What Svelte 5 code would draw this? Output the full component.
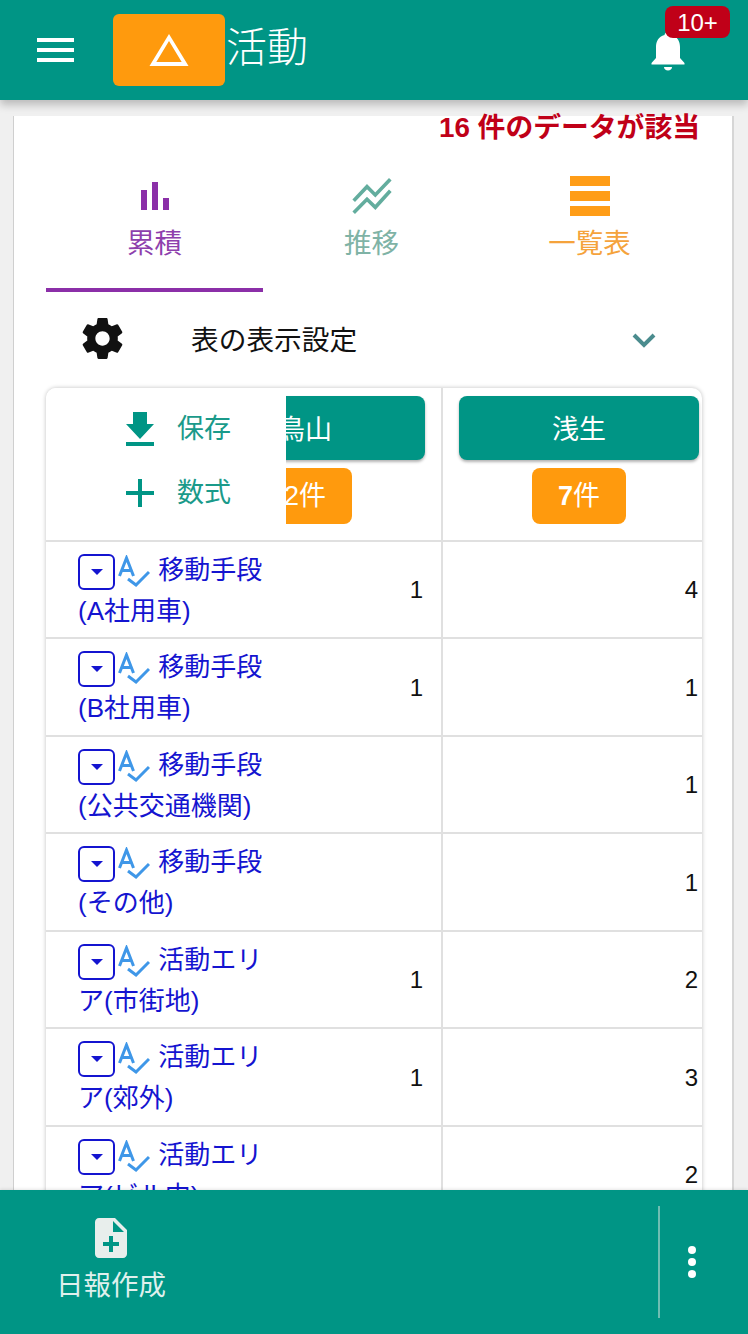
<script>
  const rows = [
    { label: '移動手段(A社用車)', a: '1', b: '4' },
    { label: '移動手段(B社用車)', a: '1', b: '1' },
    { label: '移動手段(公共交通機関)', a: '', b: '1' },
    { label: '移動手段(その他)', a: '', b: '1' },
    { label: '活動エリア(市街地)', a: '1', b: '2' },
    { label: '活動エリア(郊外)', a: '1', b: '3' },
    { label: '活動エリア(ビル内)', a: '', b: '2' }
  ];
</script>

<div class="page">
  <header class="top">
    <button class="menu" aria-label="メニュー"><span></span><span></span><span></span></button>
    <div class="logo">
      <svg width="40" height="34" viewBox="0 0 40 34"><path fill-rule="evenodd" d="M20 1 L39.500 33 H.5 Z M20 8 L7.300 29 H32.700 Z" fill="#fff"/></svg>
    </div>
    <h1>活動</h1>
    <div class="bell">
      <svg width="34" height="40" viewBox="0 0 34 40"><path d="M17 0c2 0 3.200 1.200 3.500 3 6 1.500 8.500 6.500 8.500 12v11l4.500 5v1.500H.5V31L5 26V15C5 9.500 7.500 4.500 13.500 3c.3-1.800 1.500-3 3.500-3z" fill="#fff"/><path d="M13 35h8c0 2-1.800 3.500-4 3.500S13 37 13 35z" fill="#fff"/></svg>
      <span class="badge">10+</span>
    </div>
  </header>

  <main class="main">
    <section class="card">
      <p class="hits">16 件のデータが該当</p>
      <nav class="tabs">
        <div class="tab active">
          <svg width="28" height="40" viewBox="0 0 28 40"><path d="M0 14h6v20H0zM11 6h6v28h-6zM22 22h6v12h-6z" fill="#8b2fa8"/></svg>
          <span>累積</span>
        </div>
        <div class="tab trend">
          <svg width="40" height="40" viewBox="0 0 40 40"><path d="M1.700 24.700 L15 10.700 L23.300 19 L38.300 3.300 M1.700 36.700 L15 23.300 L23.300 31.300 L38.300 14.700" fill="none" stroke="#63ad9e" stroke-width="3.600"/></svg>
          <span>推移</span>
        </div>
        <div class="tab list">
          <svg width="40" height="40" viewBox="0 0 40 40"><path d="M0 0h40v10H0zM0 15h40v10H0zM0 30h40v10H0z" fill="#ff9d17"/></svg>
          <span>一覧表</span>
        </div>
      </nav>

      <div class="settings">
        <svg class="gear" width="49" height="49" viewBox="0 0 24 24"><path fill="#111" d="M19.430 12.980c.04-.32.070-.64.070-.98s-.03-.66-.07-.98l2.110-1.650c.19-.15.240-.42.120-.64l-2-3.460c-.12-.22-.39-.3-.61-.22l-2.490 1c-.52-.4-1.080-.73-1.690-.98l-.38-2.650C14.460 2.180 14.250 2 14 2h-4c-.25 0-.46.18-.49.420l-.38 2.650c-.61.25-1.170.59-1.690.98l-2.490-1c-.23-.09-.49 0-.61.22l-2 3.460c-.13.22-.07.49.12.64l2.110 1.650c-.04.32-.07.65-.07.98s.03.66.07.98l-2.110 1.650c-.19.15-.24.42-.12.64l2 3.460c.12.22.39.3.61.22l2.490-1c.52.4 1.080.73 1.690.98l.38 2.650c.03.24.24.42.49.42h4c.25 0 .46-.18.49-.42l.38-2.650c.61-.25 1.170-.59 1.690-.98l2.490 1c.23.09.49 0 .61-.22l2-3.460c.12-.22.07-.49-.12-.64l-2.110-1.650zM12 15.500c-1.930 0-3.500-1.570-3.500-3.500s1.570-3.500 3.500-3.500 3.500 1.570 3.500 3.500-1.570 3.500-3.500 3.500z"/></svg>
        <span class="set-label">表の表示設定</span>
        <svg class="chev" width="24" height="16" viewBox="0 0 24 16"><path d="M2 3l10 10L22 3" fill="none" stroke="#4b8c8e" stroke-width="4"/></svg>
      </div>

      <div class="table">
        <div class="row head">
          <div class="fixed actions">
            <div class="action">
              <svg width="28" height="34" viewBox="0 0 28 34"><path d="M7 0h14v12h7L14 27 0 12h7zM0 30h28v4H0z" fill="#009585"/></svg>
              <span>保存</span>
            </div>
            <div class="action">
              <svg width="28" height="28" viewBox="0 0 28 28"><path d="M12 0h4v12h12v4H16v12h-4V16H0v-4h12z" fill="#009585"/></svg>
              <span>数式</span>
            </div>
          </div>
          <div class="col first">
            <div class="inner">
              <div class="name">鳥山</div>
              <div class="count">2件</div>
            </div>
          </div>
          <div class="col second">
            <div class="inner">
              <div class="name">浅生</div>
              <div class="count"><b>7</b>件</div>
            </div>
          </div>
        </div>
        {#each rows as r}
          <div class="row">
            <div class="fixed label">
              <span class="drop"><i></i></span><svg class="spell" width="32" height="32" viewBox="0 0 32 32"><path d="M1.500 21 L8.500 3 L15.500 21 M4.500 15.500 H12.500" fill="none" stroke="#3f97e8" stroke-width="3"/><path d="M10 24 L18 30 L31 17" fill="none" stroke="#3f97e8" stroke-width="3"/></svg>
              {r.label}
            </div>
            <div class="col first val">{r.a}</div>
            <div class="col second val">{r.b}</div>
          </div>
        {/each}
      </div>
    </section>
  </main>

  <footer class="bottom">
    <div class="report">
      <svg width="32" height="40" viewBox="4 2 16 20"><path fill="#e8eeec" d="M14 2H6c-1.100 0-1.990.9-1.990 2L4 20c0 1.100.89 2 1.990 2H18c1.100 0 2-.9 2-2V8l-6-6zm2 14h-3v3h-2v-3H8v-2h3v-3h2v3h3v2zm-3-7V3.500L18.500 9H13z"/></svg>
      <span>日報作成</span>
    </div>
    <div class="more">
      <i></i><i></i><i></i>
    </div>
  </footer>
</div>

<style>
  :global(body) {
    margin: 0;
    background: #f0f0f0;
  }
  .page {
    width: 748px;
    height: 1334px;
    display: flex;
    flex-direction: column;
    overflow: hidden;
    font-family: "Liberation Sans", "Noto Sans CJK JP", sans-serif;
    background: #f0f0f0;
  }
  .top {
    flex: 0 0 100px;
    display: flex;
    align-items: flex-start;
    background: #009585;
    box-shadow: 0 5px 8px rgba(0, 0, 0, 0.22);
    position: relative;
    z-index: 2;
  }
  .menu {
    margin: 38px 0 0 37px;
    padding: 0;
    width: 37px;
    height: 24px;
    border: 0;
    background: none;
    display: flex;
    flex-direction: column;
    justify-content: space-between;
  }
  .menu span {
    display: block;
    height: 4px;
    background: #fff;
  }
  .logo {
    margin: 14px 0 0 39px;
    width: 112px;
    height: 72px;
    background: #ff9a0d;
    border-radius: 6px;
    display: flex;
    align-items: center;
    justify-content: center;
  }
  h1 {
    margin: 22px 0 0 1px;
    color: #fff;
    font-size: 41px;
    font-weight: 300;
    line-height: 52px;
  }
  .bell {
    margin: 32px 63px 0 auto;
    position: relative;
    width: 34px;
    height: 40px;
  }
  .badge {
    position: absolute;
    left: 14px;
    top: -26px;
    width: 65px;
    height: 32px;
    border-radius: 8px;
    background: #c00018;
    color: #fff;
    font-size: 24px;
    line-height: 33px;
    text-align: center;
  }
  .main {
    flex: 1;
    min-height: 0;
    overflow: hidden;
    padding: 16px 14px 0 13px;
  }
  .card {
    background: #fff;
    height: 100%;
    border-left: 1px solid #cfcfcf;
    border-right: 2px solid #d6d6d6;
    box-sizing: border-box;
    padding: 0 30px 0 32px;
  }
  .hits {
    margin: 0 2px 0 0;
    height: 24px;
    text-align: right;
    color: #c00018;
    font-size: 27.800px;
    font-weight: 700;
    line-height: 24px;
    white-space: nowrap;
  }
  .tabs {
    display: grid;
    grid-template-columns: 217px 217px 219px;
    height: 152px;
  }
  .tab {
    display: flex;
    flex-direction: column;
    align-items: center;
    padding-top: 36px;
    box-sizing: border-box;
    font-size: 27.500px;
    line-height: 36px;
    height: 152px;
  }
  .tab svg {
    display: block;
    margin-bottom: 10px;
  }
  .tab.active {
    color: #8e3fad;
    border-bottom: 4px solid #8b2fa8;
  }
  .tab.trend {
    color: #7fb3a6;
  }
  .tab.list {
    color: #f5a33c;
  }
  .settings {
    height: 96px;
    display: flex;
    align-items: center;
  }
  .gear {
    margin-left: 32px;
    margin-top: -3px;
  }
  .set-label {
    margin-left: 64px;
    margin-top: -4px;
    font-size: 27.700px;
    color: #111;
  }
  .chev {
    margin-left: auto;
    margin-right: 46px;
  }
  .table {
    width: 656px;
    border-radius: 10px 10px 0 0;
    box-shadow: 0 0 4px rgba(0, 0, 0, 0.25);
    background: #fff;
    overflow: hidden;
  }
  .row {
    display: flex;
    height: 97.500px;
    box-sizing: border-box;
    border-bottom: 2px solid #e0e0e0;
    width: 656px;
  }
  .row.head {
    height: 153.500px;
  }
  .fixed {
    flex: 0 0 240px;
    box-sizing: border-box;
    background: #fff;
    position: relative;
    z-index: 1;
  }
  .actions {
    padding: 9px 0 0 80px;
  }
  .action {
    display: flex;
    align-items: center;
    height: 64px;
    color: #1a9a8a;
    font-size: 27px;
  }
  .action span {
    margin-left: 23px;
    line-height: 36px;
  }
  .col {
    box-sizing: border-box;
    border-right: 2px solid #e0e0e0;
  }
  .col.first {
    flex: 0 0 157px;
  }
  .col.second {
    flex: 0 0 259px;
    border-right: 0;
  }
  .inner {
    width: 240px;
    display: flex;
    flex-direction: column;
    align-items: center;
    padding-top: 8px;
  }
  .first .inner {
    margin-left: -101px;
  }
  .second .inner {
    margin-left: 16px;
  }
  .name {
    width: 240px;
    height: 64px;
    background: #009585;
    border-radius: 8px;
    box-shadow: 0 2px 3px rgba(0, 0, 0, 0.3);
    color: #fff;
    font-size: 27px;
    line-height: 68px;
    text-align: center;
  }
  .count {
    margin-top: 8px;
    width: 94px;
    height: 56px;
    background: #ff9a0d;
    border-radius: 8px;
    color: #fff;
    font-size: 27px;
    line-height: 56px;
    text-align: center;
  }
  .label {
    padding: 8px 6px 0 32px;
    color: #1414d0;
    font-size: 26px;
    line-height: 41px;
  }
  .drop {
    display: inline-flex;
    align-items: center;
    justify-content: center;
    width: 37px;
    height: 36px;
    margin: 4px 0 -10px;
    box-sizing: border-box;
    border: 2px solid #1414d0;
    border-radius: 6px;
    vertical-align: top;
  }
  .drop i {
    width: 0;
    height: 0;
    border-style: solid;
    border-width: 6px 6px 0;
    border-color: #1414d0 transparent transparent;
  }
  .spell {
    margin: 5px 1px -8px 3px;
    vertical-align: top;
  }
  .val {
    display: flex;
    align-items: center;
    justify-content: flex-end;
    color: #111;
    font-size: 24px;
    padding-top: 2px;
  }
  .col.first.val {
    padding-right: 18px;
  }
  .col.second.val {
    padding-right: 4px;
  }
  .bottom {
    flex: 0 0 144px;
    background: #009585;
    display: flex;
    position: relative;
    z-index: 2;
    box-shadow: 0 -1px 3px rgba(0, 0, 0, 0.1);
  }
  .report {
    margin-left: 57px;
    padding-top: 28px;
    width: 108px;
    display: flex;
    flex-direction: column;
    align-items: center;
    color: #dff0ed;
    font-size: 27.500px;
  }
  .report span {
    margin-top: 8px;
    line-height: 40px;
    white-space: nowrap;
  }
  .more {
    margin: 16px 0 16px auto;
    width: 64px;
    padding-right: 24px;
    border-left: 2px solid #6fbdb2;
    display: flex;
    flex-direction: column;
    align-items: center;
    justify-content: center;
    gap: 4px;
  }
  .more i {
    width: 8px;
    height: 8px;
    border-radius: 50%;
    background: #fff;
  }
</style>
